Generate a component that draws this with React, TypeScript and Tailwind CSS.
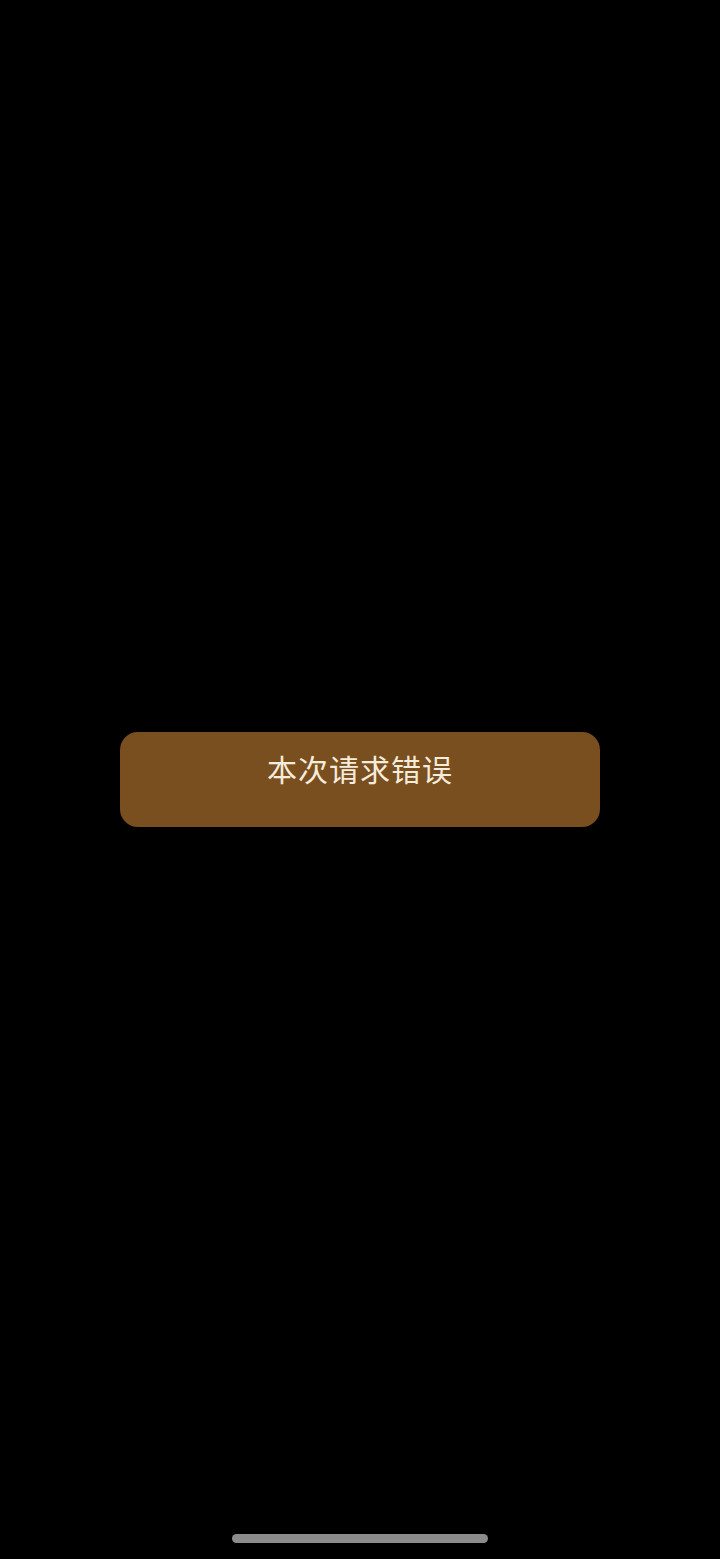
export default function App() {
  return (
    <div
      className="relative w-full h-[1559px] bg-black flex items-center justify-center overflow-hidden"
      style={{ fontFamily: '"Noto Sans CJK SC", "Noto Sans", sans-serif' }}
    >
      {/* Error toast */}
      <div className="w-[480px] h-[95px] rounded-[18px] bg-[#7a4f20] flex justify-center pt-[14px]">
        <span className="text-[30px] leading-[45px] tracking-[1px] text-[#f5ecdc]">本次请求错误</span>
      </div>

      {/* Home indicator */}
      <div className="absolute bottom-[16px] left-1/2 -translate-x-1/2 w-[256px] h-[9px] rounded-full bg-[#8c8c8c]" />
    </div>
  )
}
